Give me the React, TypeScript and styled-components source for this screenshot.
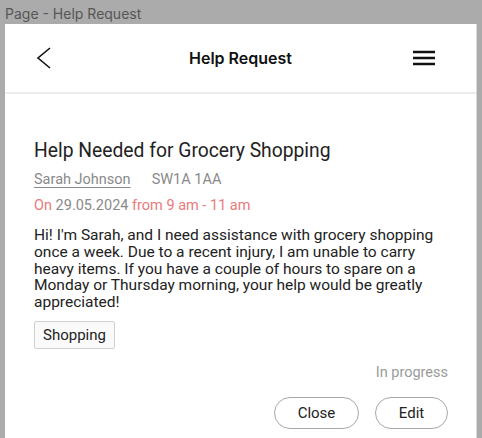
import React from "react";
import styled, { createGlobalStyle } from "styled-components";

const Global = createGlobalStyle`
  html, body { margin: 0; padding: 0; background: #ababab; }
  body { font-family: Roboto, "Liberation Sans", sans-serif; }
  * { box-sizing: border-box; }
`;

const Screen = styled.div`
  width: 482px;
  height: 438px;
  overflow: hidden;
  background: #ababab;
  display: flex;
  flex-direction: column;
`;

const PageLabel = styled.div`
  height: 24px;
  padding: 5px 0 0 5px;
  font-family: Inter, "Liberation Sans", sans-serif;
  font-size: 14px;
  line-height: 17px;
  color: #575757;
`;

const Panel = styled.div`
  margin: 0 5px 0 5px;
  flex: 1;
  background: #fff;
  border-right: 1px solid #d8d8d8;
  display: flex;
  flex-direction: column;
`;

const Header = styled.header`
  height: 70px;
  border-bottom: 2px solid #ececec;
  display: grid;
  grid-template-columns: 1fr auto 1fr;
  align-items: center;
  padding: 0 27px;
`;

const IconButton = styled.button<{ $end?: boolean }>`
  border: none;
  background: none;
  padding: 0;
  width: 24px;
  height: 24px;
  margin-right: ${(p) => (p.$end ? "13px" : "0")};
  display: flex;
  align-items: center;
  justify-content: center;
  justify-self: ${(p) => (p.$end ? "end" : "start")};
  cursor: pointer;
`;

const HeaderTitle = styled.h1`
  margin: 0;
  font-family: Inter, "Liberation Sans", sans-serif;
  font-weight: 600;
  font-size: 16px;
  color: #111;
`;

const Content = styled.main`
  padding: 44px 28px 0 29px;
  display: flex;
  flex-direction: column;
`;

const Title = styled.h2`
  margin: 0;
  font-size: 19.3px;
  font-weight: 400;
  line-height: 25px;
  color: #222;
`;

const MetaRow = styled.div`
  margin-top: 7px;
  display: flex;
  gap: 21px;
  font-size: 14.5px;
  line-height: 20px;
  color: #8a8a8a;
`;

const Author = styled.a`
  color: #8a8a8a;
  text-decoration: underline;
  text-underline-offset: 3px;
`;

const DateLine = styled.div`
  margin-top: 6px;
  font-size: 14.5px;
  line-height: 20px;
  color: #e97a7a;
`;

const Muted = styled.span`
  color: #8a8a8a;
`;

const Description = styled.p`
  margin: 11px 0 0;
  font-size: 15.5px;
  line-height: 16.75px;
  color: #222;
`;

const Tag = styled.span`
  align-self: flex-start;
  margin-top: 10px;
  padding: 5px 8px;
  font-size: 15px;
  line-height: 16px;
  color: #222;
  background: #fafafa;
  border: 1px solid #d0d0d0;
  border-radius: 2px;
`;

const Status = styled.div`
  margin-top: 16px;
  align-self: flex-end;
  font-size: 14.5px;
  line-height: 16px;
  color: #9a9a9a;
`;

const Actions = styled.div`
  margin-top: 16px;
  align-self: flex-end;
  display: flex;
  gap: 16px;
`;

const PillButton = styled.button<{ $w: number }>`
  width: ${(p) => p.$w}px;
  height: 32px;
  border: 1px solid #a8a8a8;
  border-radius: 16px;
  background: #fff;
  font-family: Roboto, "Liberation Sans", sans-serif;
  font-size: 15px;
  color: #222;
  padding: 0;
  cursor: pointer;
`;

export default function App() {
  return (
    <Screen>
      <Global />
      <PageLabel>Page - Help Request</PageLabel>
      <Panel>
        <Header>
          <IconButton aria-label="Back">
            <svg width="24" height="24" viewBox="0 0 24 24" fill="none">
              <path d="M18 2 L6 12 L18 22" stroke="#111" strokeWidth="1.6" />
            </svg>
          </IconButton>
          <HeaderTitle>Help Request</HeaderTitle>
          <IconButton $end aria-label="Menu">
            <svg width="24" height="24" viewBox="0 0 24 24" fill="none">
              <path d="M1 6 H23 M1 12 H23 M1 18 H23" stroke="#111" strokeWidth="2.4" />
            </svg>
          </IconButton>
        </Header>
        <Content>
          <Title>Help Needed for Grocery Shopping</Title>
          <MetaRow>
            <Author href="#">Sarah Johnson</Author>
            <span>SW1A 1AA</span>
          </MetaRow>
          <DateLine>
            On <Muted>29.05.2024</Muted> from 9 am - 11 am
          </DateLine>
          <Description>
            Hi! I'm Sarah, and I need assistance with grocery shopping once a week. Due to a recent
            injury, I am unable to carry heavy items. If you have a couple of hours to spare on a
            Monday or Thursday morning, your help would be greatly appreciated!
          </Description>
          <Tag>Shopping</Tag>
          <Status>In progress</Status>
          <Actions>
            <PillButton $w={85}>Close</PillButton>
            <PillButton $w={73}>Edit</PillButton>
          </Actions>
        </Content>
      </Panel>
    </Screen>
  );
}
